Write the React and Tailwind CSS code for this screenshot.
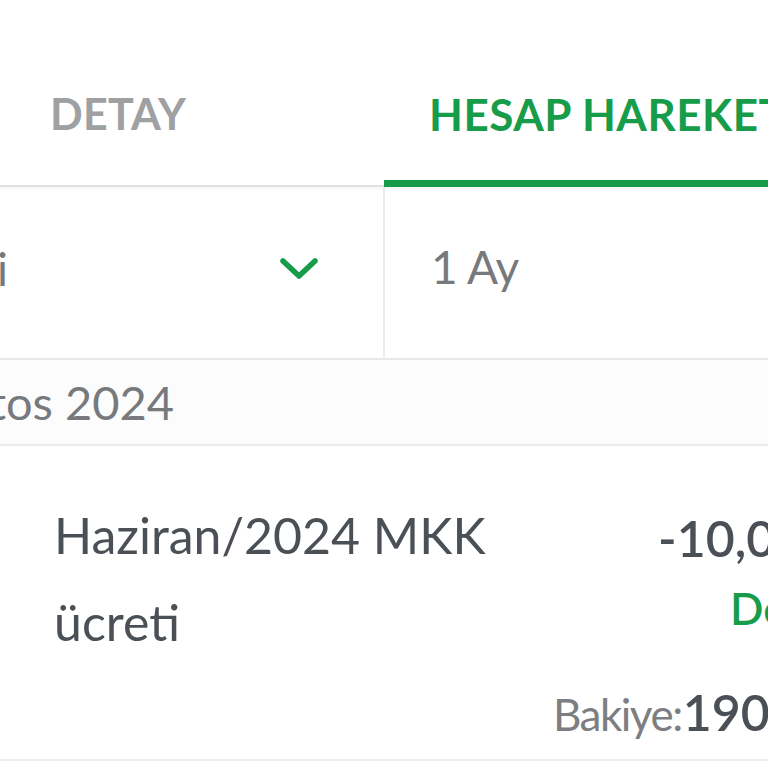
import React from "react";

const ChevronDown = () => (
    <svg width="40" height="26" viewBox="0 0 40 26" fill="none">
        <polyline points="4,5 20,20 36,5" stroke="#179c4a" strokeWidth="5.5" strokeLinecap="round" strokeLinejoin="round" />
    </svg>
);

const App = () => {
    return (
        <div className="w-[768px] h-[768px] overflow-hidden bg-white font-[Lato,'Noto_Sans',sans-serif]">
            {/* Tabs */}
            <div className="flex h-[187px] shadow-[0_2px_3px_rgba(0,0,0,0.04)] relative">
                <div className="w-[384px] shrink-0 border-b-2 border-[#e2e2e2] pl-[50px] pt-[92px]">
                    <span className="text-[43px] leading-none font-bold text-[#9ea0a2] tracking-[0.3px]">DETAY</span>
                </div>
                <div className="w-[600px] shrink-0 border-b-[7px] border-[#179c4a] pl-[45px] pt-[92px]">
                    <span className="text-[44px] leading-none font-bold text-[#179c4a] whitespace-nowrap tracking-[0.5px]">HESAP HAREKETLERİ</span>
                </div>
            </div>

            {/* Filters */}
            <div className="flex h-[173px] border-b-2 border-[#e8e8e8]">
                <div className="w-[385px] shrink-0 flex items-center justify-between border-r-2 border-[#ececec] pr-[64px] pb-2">
                    <div className="w-[8px] flex justify-end whitespace-nowrap text-[46px] leading-none text-[#77797c]">
                        Hepsi
                    </div>
                    <ChevronDown />
                </div>
                <div className="flex-1 flex items-center pl-[46px] pb-3">
                    <span className="text-[46px] leading-none text-[#77797c] tracking-[-0.5px]">1 Ay</span>
                </div>
            </div>

            {/* Month header */}
            <div className="h-[86px] flex items-center border-b-2 border-[#ececec] bg-[#fcfcfc]">
                <div className="w-[174px] flex justify-end whitespace-nowrap text-[47px] leading-none text-[#77797c]">
                    Ağustos 2024
                </div>
            </div>

            {/* Transaction */}
            <div className="flex h-[315px] border-b-2 border-[#ececec]">
                <div className="w-[553px] shrink-0 pl-[54px] pt-[46px]">
                    <p className="text-[50px] leading-[87px] text-[#4b5056]">Haziran/2024 MKK ücreti</p>
                </div>
                <div className="flex flex-col items-start pt-[62px] whitespace-nowrap">
                    <span className="ml-[105px] text-[50px] leading-[60px] font-semibold text-[#4b5056]">-10,00 TL</span>
                    <span className="ml-[177px] mt-[10px] text-[44px] leading-[60px] font-semibold text-[#179c4a]">Detay</span>
                    <span className="mt-[44px] leading-[60px] flex items-baseline">
                        <span className="text-[44px] tracking-[-1.5px] text-[#7c7e81]">Bakiye:</span>
                        <span className="ml-[1px] text-[50px] font-semibold text-[#4b5056]">190,25 TL</span>
                    </span>
                </div>
            </div>
        </div>
    );
};

export default App;
